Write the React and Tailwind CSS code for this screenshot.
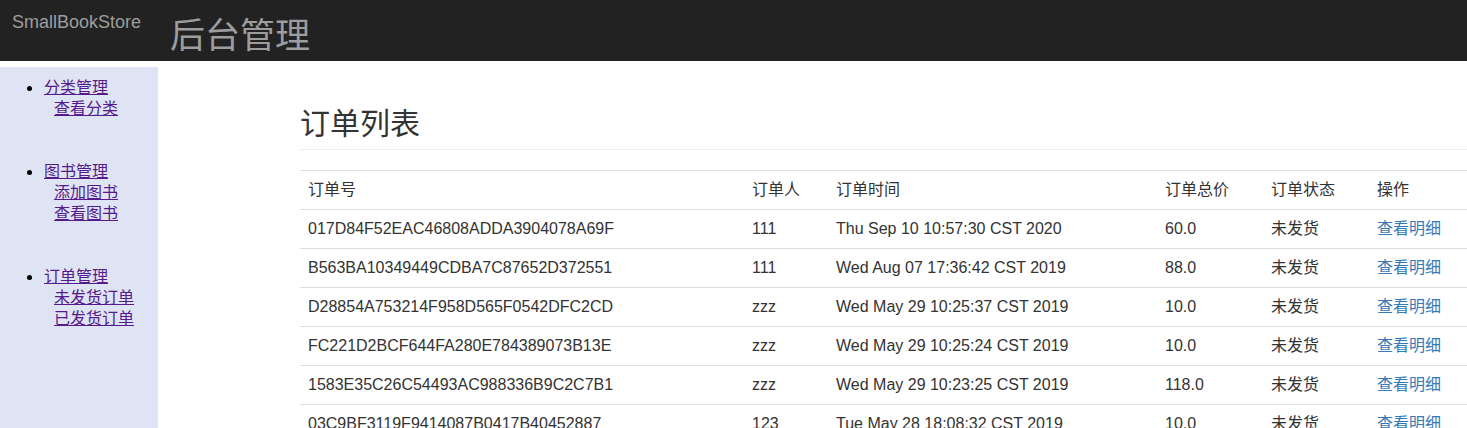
import React from 'react';

// order rows shown in the table
const orders = [
    { id: '017D84F52EAC46808ADDA3904078A69F', user: '111', time: 'Thu Sep 10 10:57:30 CST 2020', total: '60.0' },
    { id: 'B563BA10349449CDBA7C87652D372551', user: '111', time: 'Wed Aug 07 17:36:42 CST 2019', total: '88.0' },
    { id: 'D28854A753214F958D565F0542DFC2CD', user: 'zzz', time: 'Wed May 29 10:25:37 CST 2019', total: '10.0' },
    { id: 'FC221D2BCF644FA280E784389073B13E', user: 'zzz', time: 'Wed May 29 10:25:24 CST 2019', total: '10.0' },
    { id: '1583E35C26C54493AC988336B9C2C7B1', user: 'zzz', time: 'Wed May 29 10:23:25 CST 2019', total: '118.0' },
    { id: '03C9BF3119F9414087B0417B40452887', user: '123', time: 'Tue May 28 18:08:32 CST 2019', total: '10.0' },
];

const menu = [
    { title: '分类管理', items: ['查看分类'] },
    { title: '图书管理', items: ['添加图书', '查看图书'] },
    { title: '订单管理', items: ['未发货订单', '已发货订单'] },
];

const font = { fontFamily: '"Liberation Sans", Arial, "Noto Sans CJK SC", sans-serif' };

const Sidebar = () => (
    <div className="w-[158px] shrink-0 bg-[#dfe4f5] mt-[6px] h-[500px] pt-[10px]">
        <ul className="list-disc pl-[44px] text-[16px] leading-[21px]">
            {menu.map((group) => (
                <li key={group.title} className="mb-[42px] marker:text-black marker:text-[18px]">
                    <a href="#" className="text-[#551a8b] underline">{group.title}</a>
                    <div className="pl-[10px] flex flex-col items-start">
                        {group.items.map((item) => (
                            <a key={item} href="#" className="text-[#551a8b] underline">{item}</a>
                        ))}
                    </div>
                </li>
            ))}
        </ul>
    </div>
);

const OrderTable = () => (
    <table className="w-[1167px] border-collapse text-[16px] leading-[22px] text-[#333] table-fixed">
        <colgroup>
            <col className="w-[444px]" />
            <col className="w-[84px]" />
            <col className="w-[329px]" />
            <col className="w-[106px]" />
            <col className="w-[106px]" />
            <col className="w-[98px]" />
        </colgroup>
        <thead>
            <tr className="border-t border-[#ddd]">
                {['订单号', '订单人', '订单时间', '订单总价', '订单状态', '操作'].map((h) => (
                    <th key={h} className="text-left font-normal px-2 py-2 border-b border-[#ddd]">{h}</th>
                ))}
            </tr>
        </thead>
        <tbody>
            {orders.map((o) => (
                <tr key={o.id} className="border-b border-[#ddd]">
                    <td className="px-2 py-2">{o.id}</td>
                    <td className="px-2 py-2">{o.user}</td>
                    <td className="px-2 py-2">{o.time}</td>
                    <td className="px-2 py-2">{o.total}</td>
                    <td className="px-2 py-2">未发货</td>
                    <td className="px-2 py-2">
                        <a href="#" className="text-[#337ab7]">查看明细</a>
                    </td>
                </tr>
            ))}
        </tbody>
    </table>
);

export default function App() {
    return (
        <div className="h-[428px] w-[1467px] overflow-hidden bg-white" style={font}>
            {/* top bar */}
            <div className="h-[61px] bg-[#222] flex items-start">
                <div className="pl-[12px] pt-[12px] text-[18px] leading-[20px] text-[#9d9d9d] w-[170px]">SmallBookStore</div>
                <div className="pt-[16px] text-[35px] leading-[40px] text-[#9d9d9d]">后台管理</div>
            </div>

            <div className="flex">
                <Sidebar />
                <div className="pl-[142px]">
                    <h1 className="text-[30px] leading-[36px] text-[#333] mt-[45px] pb-[7px] border-b border-[#eee] w-[1167px]">订单列表</h1>
                    <div className="mt-[20px]">
                        <OrderTable />
                    </div>
                </div>
            </div>
        </div>
    );
}
